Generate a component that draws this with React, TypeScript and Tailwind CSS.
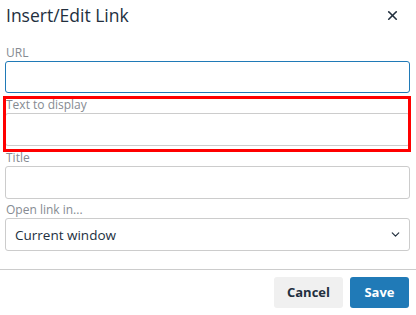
import { ChevronDown, X } from 'lucide-react'

const FONT = { fontFamily: '"Open Sans", "Noto Sans", sans-serif' }

function Field({ label, children }: { label: string; children: React.ReactNode }) {
  return (
    <div className="flex flex-col">
      <label className="h-[16px] leading-[16px] text-[12px] text-[#868b92] pl-[1px]">{label}</label>
      {children}
    </div>
  )
}

export default function App() {
  return (
    <div className="w-[416px] h-[315px] bg-white text-[#222f3e] overflow-hidden" style={FONT}>
      {/* Header */}
      <div className="h-[45px] flex items-start justify-between pl-[6px] pr-[16px] pt-[1px]">
        <h1 className="text-[17.5px] leading-[28px]">Insert/Edit Link</h1>
        <button type="button" className="mt-[7px] text-[#222f3e]">
          <X size={15} strokeWidth={2.6} />
        </button>
      </div>

      {/* Body */}
      <div className="flex flex-col gap-[3.4px] pl-[5px] pr-[6px]">
        <Field label="URL">
          <input className="h-[32px] mb-[1px] rounded-[3px] border border-[#207ab7] bg-white outline-none" />
        </Field>

        <div className="relative">
          <Field label="Text to display">
            <input className="h-[33px] rounded-[3px] border border-[#cccccc] bg-white outline-none" />
          </Field>
          {/* highlight */}
          <div className="absolute -left-[2px] -right-[1px] -top-[1px] -bottom-[6px] border-[3px] border-[#ff0000] pointer-events-none" />
        </div>

        <Field label="Title">
          <input className="h-[33px] rounded-[3px] border border-[#cccccc] bg-white outline-none" />
        </Field>

        <Field label="Open link in...">
          <div className="h-[33px] rounded-[3px] border border-[#cccccc] bg-white flex items-center justify-between pl-[9px] pr-[7px]">
            <span className="text-[13.5px]">Current window</span>
            <ChevronDown size={13} strokeWidth={2.2} />
          </div>
        </Field>
      </div>

      {/* Footer */}
      <div className="mt-[18px] border-t border-[#cccccc] flex justify-end gap-[7px] pt-[7px] pr-[7px]">
        <button type="button" className="w-[69px] h-[31px] rounded-[3px] bg-[#f0f0f0] text-[13px] font-bold text-[#222f3e]">
          Cancel
        </button>
        <button type="button" className="w-[59px] h-[31px] rounded-[3px] bg-[#207ab7] text-[13px] font-bold text-white">
          Save
        </button>
      </div>
    </div>
  )
}
